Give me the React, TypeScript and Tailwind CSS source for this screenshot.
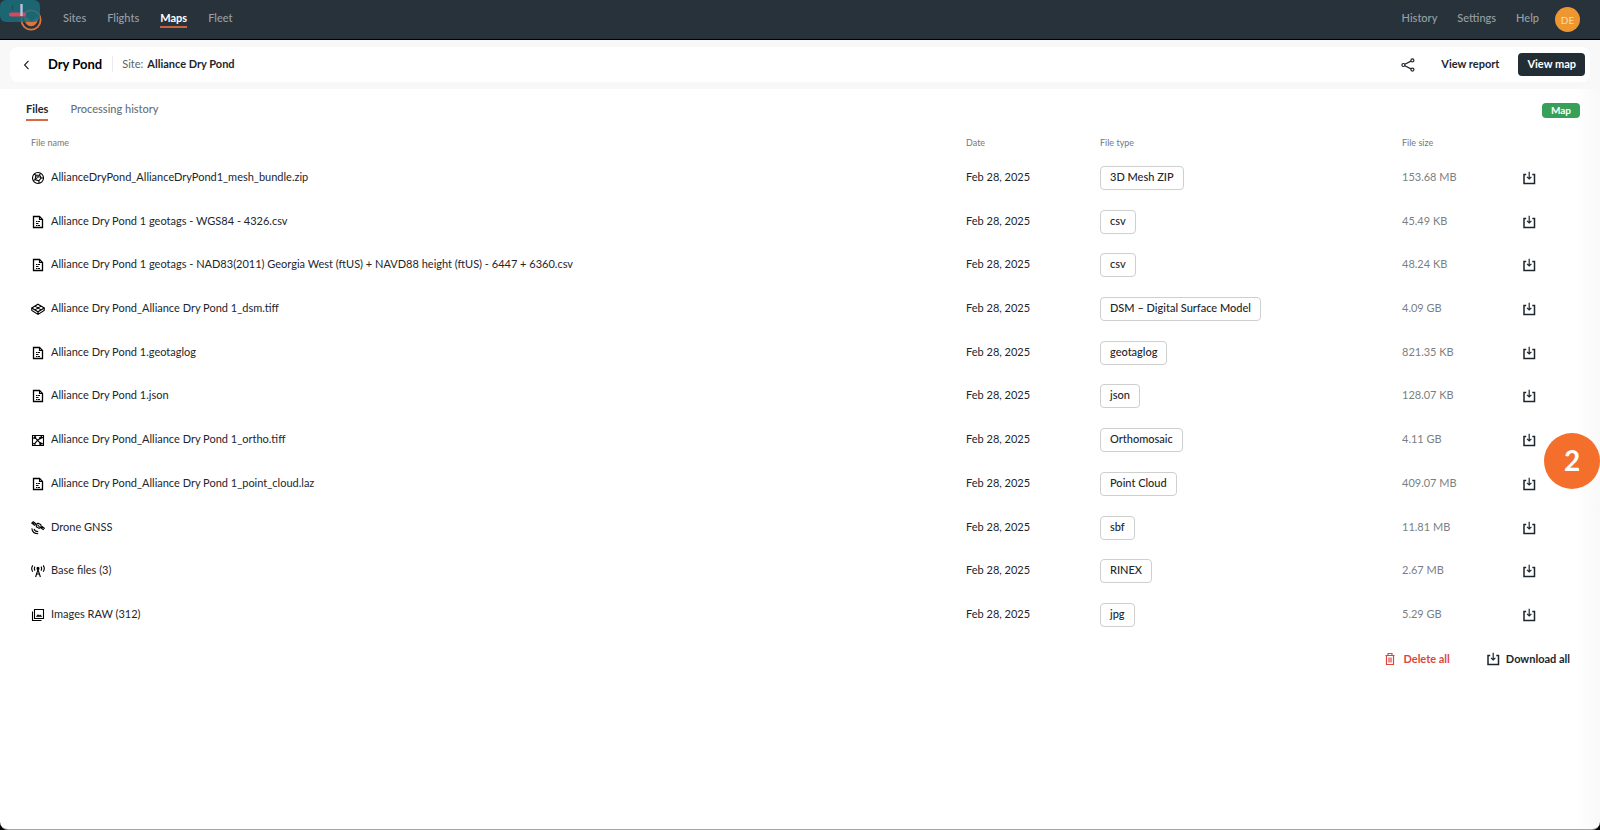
import { useState } from 'react'
import type { ReactNode } from 'react'

type IconName = 'mesh' | 'doc' | 'layers' | 'ortho' | 'satellite' | 'antenna' | 'images'

const files: { icon: IconName; name: string; type: string; size: string }[] = [
  { icon: 'mesh', name: 'AllianceDryPond_AllianceDryPond1_mesh_bundle.zip', type: '3D Mesh ZIP', size: '153.68 MB' },
  { icon: 'doc', name: 'Alliance Dry Pond 1 geotags - WGS84 - 4326.csv', type: 'csv', size: '45.49 KB' },
  {
    icon: 'doc',
    name: 'Alliance Dry Pond 1 geotags - NAD83(2011) Georgia West (ftUS) + NAVD88 height (ftUS) - 6447 + 6360.csv',
    type: 'csv',
    size: '48.24 KB',
  },
  { icon: 'layers', name: 'Alliance Dry Pond_Alliance Dry Pond 1_dsm.tiff', type: 'DSM – Digital Surface Model', size: '4.09 GB' },
  { icon: 'doc', name: 'Alliance Dry Pond 1.geotaglog', type: 'geotaglog', size: '821.35 KB' },
  { icon: 'doc', name: 'Alliance Dry Pond 1.json', type: 'json', size: '128.07 KB' },
  { icon: 'ortho', name: 'Alliance Dry Pond_Alliance Dry Pond 1_ortho.tiff', type: 'Orthomosaic', size: '4.11 GB' },
  { icon: 'doc', name: 'Alliance Dry Pond_Alliance Dry Pond 1_point_cloud.laz', type: 'Point Cloud', size: '409.07 MB' },
  { icon: 'satellite', name: 'Drone GNSS', type: 'sbf', size: '11.81 MB' },
  { icon: 'antenna', name: 'Base files (3)', type: 'RINEX', size: '2.67 MB' },
  { icon: 'images', name: 'Images RAW (312)', type: 'jpg', size: '5.29 GB' },
]

const iconShapes: Record<IconName, ReactNode> = {
  mesh: (
    <>
      <circle cx="7" cy="7" r="5.5" />
      <path d="M5 4.2 8.6 4l1.6 3-2.4 2.8L4 8.6zM5 4.2 3 3M8.6 4l.8-2M10.2 7h2.2M7.8 9.8l.4 2.4M4 8.6 2 9.8" />
      <path d="m4.6 6 3.4-.4 2 1.6M4 8.6l4-3" strokeWidth="0.8" />
    </>
  ),
  doc: (
    <>
      <path d="M2.5 1.5h6l3 3v8h-9z" strokeWidth="1.3" />
      <path d="M8.5 1.5v3h3" />
      <path d="M5 6.500h1.500M7 6.500h2M5 8.500h2.500M5 10.500h1.500M7 10.500h2" />
    </>
  ),
  layers: (
    <>
      <path d="M7 2.2 13.2 6 7 9.8.8 6z" />
      <path d="M.8 6v2.4L7 12.4l6.2-4V6M7 9.8v2.6M3.9 4.1l6.2 3.8M10.1 4.1 3.9 7.9" />
    </>
  ),
  ortho: (
    <>
      <path d="M1.5 2.5h11v10h-11z" />
      <path d="M1.5 5.5 4 4.600 6.600 7.400 9.400 5l3-.6M4 4.600V2.500M6.600 7.400 4 10.200l-2.500.8M4 10.200v2.300M6.600 7.400l3 3 2.900.6M9.600 10.400l-1 2.100M9.400 5l1.600-2.500" />
      <circle cx="4" cy="4.600" r="0.7" fill="currentColor" />
      <circle cx="9.400" cy="5" r="0.7" fill="currentColor" />
      <circle cx="9.600" cy="10.400" r="0.7" fill="currentColor" />
    </>
  ),
  satellite: (
    <>
      <path d="M.8 2.200 2.200.8l2.600 1.800-1.200 1.600zM9.800 6.800l1.200-1.400 2.400 1.800-1.200 1.400zM3.400 1.600l-1 1.600M11.800 6.200l-1 1.400" />
      <path d="m5.200 3.600 1.800-1.400 2.800 1.400.4 2.200-2 1.600-2.800-1.600zM6.600 3.800l2 2.200" />
      <path d="M.8 7.400c.4 3.200 3 5.400 6.400 5.400M3 7.800c.6 1.800 2.200 2.800 4.200 2.800" />
    </>
  ),
  antenna: (
    <>
      <path d="M1.8 1.400c-1.400 2-1.400 4.400 0 6.400M12.200 1.400c1.400 2 1.400 4.400 0 6.400M4 2.600c-.8 1.200-.8 2.800 0 4M10 2.600c.8 1.200.8 2.800 0 4" />
      <path d="M7 5.600 4.600 13M7 5.600 9.400 13M5.600 10h2.800" />
      <circle cx="7" cy="4.400" r="1" fill="currentColor" />
    </>
  ),
  images: (
    <>
      <path d="M3.500 1.500h9v9h-9zM1.500 3.500v9h9" />
      <path d="m5.400 8.600 1.600-2 1.200 1.200 1-1 1.600 1.800z" fill="currentColor" strokeWidth="0.6" />
    </>
  ),
}

function FileIcon({ name }: { name: IconName }) {
  return (
    <svg viewBox="0 0 14 14" className="h-3.5 w-3.5 shrink-0 text-black" fill="none" stroke="currentColor" strokeWidth="1.1" aria-hidden="true">
      {iconShapes[name]}
    </svg>
  )
}

function DownloadIcon() {
  return (
    <svg viewBox="0 0 14 14" className="h-3.5 w-3.5 shrink-0" fill="none" stroke="currentColor" strokeWidth="1.5" aria-hidden="true">
      <path d="M4.2 3.500H2v9h10.500v-9h-2.200" />
      <path d="M7.200.8v7M5 5.800 7.200 8l2.200-2.200" strokeWidth="1.2" />
    </svg>
  )
}

function TrashIcon() {
  return (
    <svg viewBox="0 0 14 14" className="h-3.5 w-3.5 shrink-0" fill="none" stroke="currentColor" strokeWidth="1.2" aria-hidden="true">
      <path d="M2.500 3.500h9M5 3.200V1.500h4v1.700M3.500 3.500v9h7v-9M6 5.600v4.800M8 5.600v4.800" />
    </svg>
  )
}

function Logo() {
  return (
    <svg viewBox="0 0 22 22" className="h-[22px] w-[22px]" aria-hidden="true">
      <circle cx="11" cy="11" r="9.6" fill="none" stroke="#e0743f" strokeWidth="1.8" />
      <path d="M4.600 6.500 8.600 10l2.400 2.600L16 9.500l1.400-2c1.400 5.400-1.800 9.700-6.400 9.700S3.600 12 4.600 6.500z" fill="#e0743f" />
    </svg>
  )
}

const navItems = ['Sites', 'Flights', 'Maps', 'Fleet']
const sideItems = ['History', 'Settings', 'Help']

export default function App() {
  const [tab, setTab] = useState('Files')

  return (
    <div className="min-h-screen bg-black font-['Lato',sans-serif] text-[11px] leading-4 text-[#1d262d]">
      <div className="relative flex min-h-screen flex-col overflow-hidden rounded-b-lg border-b border-[#a5a5a5] bg-[linear-gradient(to_left,#f9f9f9,#ffffff_26px)]">
        <header className="relative flex h-10 items-center justify-between border-b border-black bg-[#27323b] px-5 text-[#98a0a6]">
          <div className="flex items-center gap-[21px]">
            <a href="#home" aria-label="Home">
              <Logo />
            </a>
            <nav className="flex gap-[21px] pb-0.5">
              {navItems.map((item) => (
                <a
                  key={item}
                  href={`#${item.toLowerCase()}`}
                  className={item === 'Maps' ? 'border-b-2 border-[#c8643c] font-bold text-white' : 'border-b-2 border-transparent font-medium'}
                >
                  {item}
                </a>
              ))}
            </nav>
          </div>
          <div className="flex items-center gap-4">
            <nav className="flex gap-5 pb-1">
              {sideItems.map((item) => (
                <a key={item} href={`#${item.toLowerCase()}`} className="font-medium">
                  {item}
                </a>
              ))}
            </nav>
            <button className="h-[25px] w-[25px] rounded-full bg-[#ee9730] text-[10px] text-[#fbdcae]">DE</button>
          </div>
          <div className="absolute top-0 left-0 h-[22px] w-10 rounded-md bg-[#1b6f7d]/85">
            <svg viewBox="0 0 40 22" className="h-full w-full" aria-hidden="true">
              <path d="M11 14.500h13" stroke="#d8475f" strokeWidth="4" strokeLinecap="round" />
              <path d="M21.500 4v12" stroke="#b9c3dc" strokeWidth="2.400" />
              <path d="M12.500 5v5" stroke="#1d4f5c" strokeWidth="1.200" />
            </svg>
          </div>
        </header>

        <div className="bg-[#f8f8f8] px-2.5 py-[7px]">
          <div className="flex h-[35px] items-center rounded-lg bg-white pr-[5px] pl-3">
            <button aria-label="Back" className="mr-4">
              <svg viewBox="0 0 10 10" className="h-2.5 w-2.5" fill="none" stroke="currentColor" strokeWidth="1.2">
                <path d="M6.500.8 2.600 5l3.900 4.200" />
              </svg>
            </button>
            <div className="flex items-center pb-0.5">
              <h1 className="border-r border-[#ececec] pr-2.5 text-[13px] font-bold text-black">Dry Pond</h1>
              <p className="flex gap-1 pl-[9px] text-[#5b646b]">
                Site: <span className="font-bold text-[#1d262d]">Alliance Dry Pond</span>
              </p>
            </div>
            <div className="ml-auto flex items-center">
              <button aria-label="Share" className="mr-[26px]">
                <svg viewBox="0 0 14 14" className="h-3.5 w-3.5" fill="none" stroke="currentColor" strokeWidth="1.2">
                  <circle cx="2.4" cy="7" r="1.5" />
                  <circle cx="11.4" cy="2.4" r="1.5" />
                  <circle cx="11.4" cy="11.6" r="1.5" />
                  <path d="m3.800 6.300 6.200-3.200M3.800 7.700l6.200 3.200" />
                </svg>
              </button>
              <button className="mr-[19px] pb-0.5 font-bold">View report</button>
              <button className="h-[23px] rounded bg-[#222d36] px-[9px] pb-0.5 font-bold text-white">View map</button>
            </div>
          </div>
        </div>

        <main className="px-5 pt-3">
          <div className="flex items-start justify-between pl-1.5">
            <div role="tablist" className="flex gap-[22px]">
              {['Files', 'Processing history'].map((label) => (
                <button
                  key={label}
                  role="tab"
                  aria-selected={tab === label}
                  onClick={() => setTab(label)}
                  className={
                    tab === label
                      ? 'border-b-2 border-[#d8683f] pb-0.5 font-bold text-[#1d262d]'
                      : 'border-b-2 border-transparent pb-0.5 font-medium text-[#66717a]'
                  }
                >
                  {label}
                </button>
              ))}
            </div>
            <span className="mt-0.5 rounded bg-[#369f58] px-[9px] text-[10px] leading-[15px] font-bold text-white">Map</span>
          </div>

          <table className="mt-3 h-[504px] w-full table-fixed text-left">
            <thead className="text-[9px] leading-5 text-[#727a80]">
              <tr className="h-[23px] align-top">
                <th className="pl-[11px] font-normal">File name</th>
                <th className="w-[134px] font-normal">Date</th>
                <th className="w-[302px] font-normal">File type</th>
                <th className="w-[120px] font-normal">File size</th>
                <th className="w-[58px]" aria-label="Download" />
              </tr>
            </thead>
            <tbody>
              {files.map((file) => (
                <tr key={file.name}>
                  <td className="pl-[11px]">
                    <div className="flex items-center gap-1.5">
                      <FileIcon name={file.icon} />
                      <span className="pb-0.5">{file.name}</span>
                    </div>
                  </td>
                  <td className="pb-0.5">Feb 28, 2025</td>
                  <td>
                    <span className="inline-block rounded border border-[#cfcfcf] px-[9px] pt-0.5 pb-1 align-middle font-medium">
                      {file.type}
                    </span>
                  </td>
                  <td className="pb-0.5 text-[#7b7f83]">{file.size}</td>
                  <td>
                    <button aria-label={`Download ${file.name}`} className="block">
                      <DownloadIcon />
                    </button>
                  </td>
                </tr>
              ))}
            </tbody>
          </table>

          <div className="mt-3.5 flex justify-end gap-9 pr-2.5 font-bold">
            <button className="flex items-center gap-1.5 text-[#dd4540]">
              <TrashIcon />
              Delete all
            </button>
            <button className="flex items-center gap-1.5">
              <DownloadIcon />
              Download all
            </button>
          </div>
        </main>

        <div className="absolute top-[433px] right-0 flex h-14 w-14 items-center justify-center rounded-full bg-[#f36f2b] pb-0.5 text-[28px] font-bold text-white">
          2
        </div>
      </div>
    </div>
  )
}
